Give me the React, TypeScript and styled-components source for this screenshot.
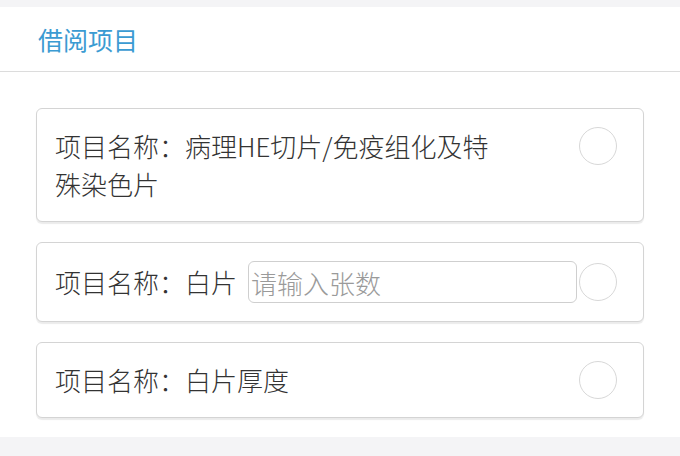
import React from 'react';
import styled, { createGlobalStyle } from 'styled-components';

const GlobalStyle = createGlobalStyle`
  html, body {
    margin: 0;
    padding: 0;
    background: #f4f4f6;
  }
  body {
    font-family: 'Noto Sans CJK SC', 'Noto Sans', sans-serif;
  }
`;

const Page = styled.div`
  width: 680px;
  height: 456px;
  background: #f4f4f6;
  padding-top: 7px;
  box-sizing: border-box;
  overflow: hidden;
`;

const Header = styled.div`
  height: 65px;
  background: #fff;
  display: flex;
  align-items: center;
  padding-left: 38px;
  border-bottom: 1px solid #dcdcdc;
  box-sizing: border-box;
`;

const Title = styled.h1`
  margin: 0;
  font-size: 25px;
  font-weight: 400;
  color: #3b9bd2;
`;

const List = styled.div`
  background: #fff;
  padding: 36px 36px 19px;
  display: flex;
  flex-direction: column;
  gap: 20px;
`;

const Card = styled.label<{ $top?: boolean }>`
  display: flex;
  align-items: ${p => (p.$top ? 'flex-start' : 'center')};
  border: 1px solid #d4d4d4;
  border-radius: 6px;
  box-shadow: 0 2px 1px rgba(0, 0, 0, 0.08);
  padding: 18px 26px 18px 18px;
  background: #fff;
`;

const Name = styled.div`
  flex: 1;
  display: flex;
  align-items: center;
  font-size: 26px;
  font-weight: 300;
  line-height: 38px;
  color: #333;
  padding-right: 80px;
  &[data-inline='true'] {
    padding-right: 2px;
  }
`;

const CountInput = styled.input`
  flex: 1;
  height: 42px;
  margin-left: 11px;
  box-sizing: border-box;
  border: 1px solid #cfcfcf;
  border-radius: 6px;
  padding: 0 2px;
  font-family: inherit;
  font-size: 26px;
  font-weight: 300;
  color: #333;
  outline: none;
  &::placeholder {
    color: #9a9a9a;
  }
`;

const Radio = styled.span`
  flex: none;
  width: 38px;
  height: 38px;
  border-radius: 50%;
  border: 1.5px solid #d8d8d8;
  box-sizing: border-box;
`;

const Bottom = styled.div`
  height: 19px;
  background: #f4f4f6;
`;

export default function App() {
  return (
    <Page>
      <GlobalStyle />
      <Header>
        <Title>借阅项目</Title>
      </Header>
      <List>
        <Card $top>
          <Name>项目名称：病理HE切片/免疫组化及特殊染色片</Name>
          <Radio />
        </Card>
        <Card>
          <Name data-inline="true">
            项目名称：白片
            <CountInput placeholder="请输入张数" />
          </Name>
          <Radio />
        </Card>
        <Card>
          <Name>项目名称：白片厚度</Name>
          <Radio />
        </Card>
      </List>
      <Bottom />
    </Page>
  );
}
